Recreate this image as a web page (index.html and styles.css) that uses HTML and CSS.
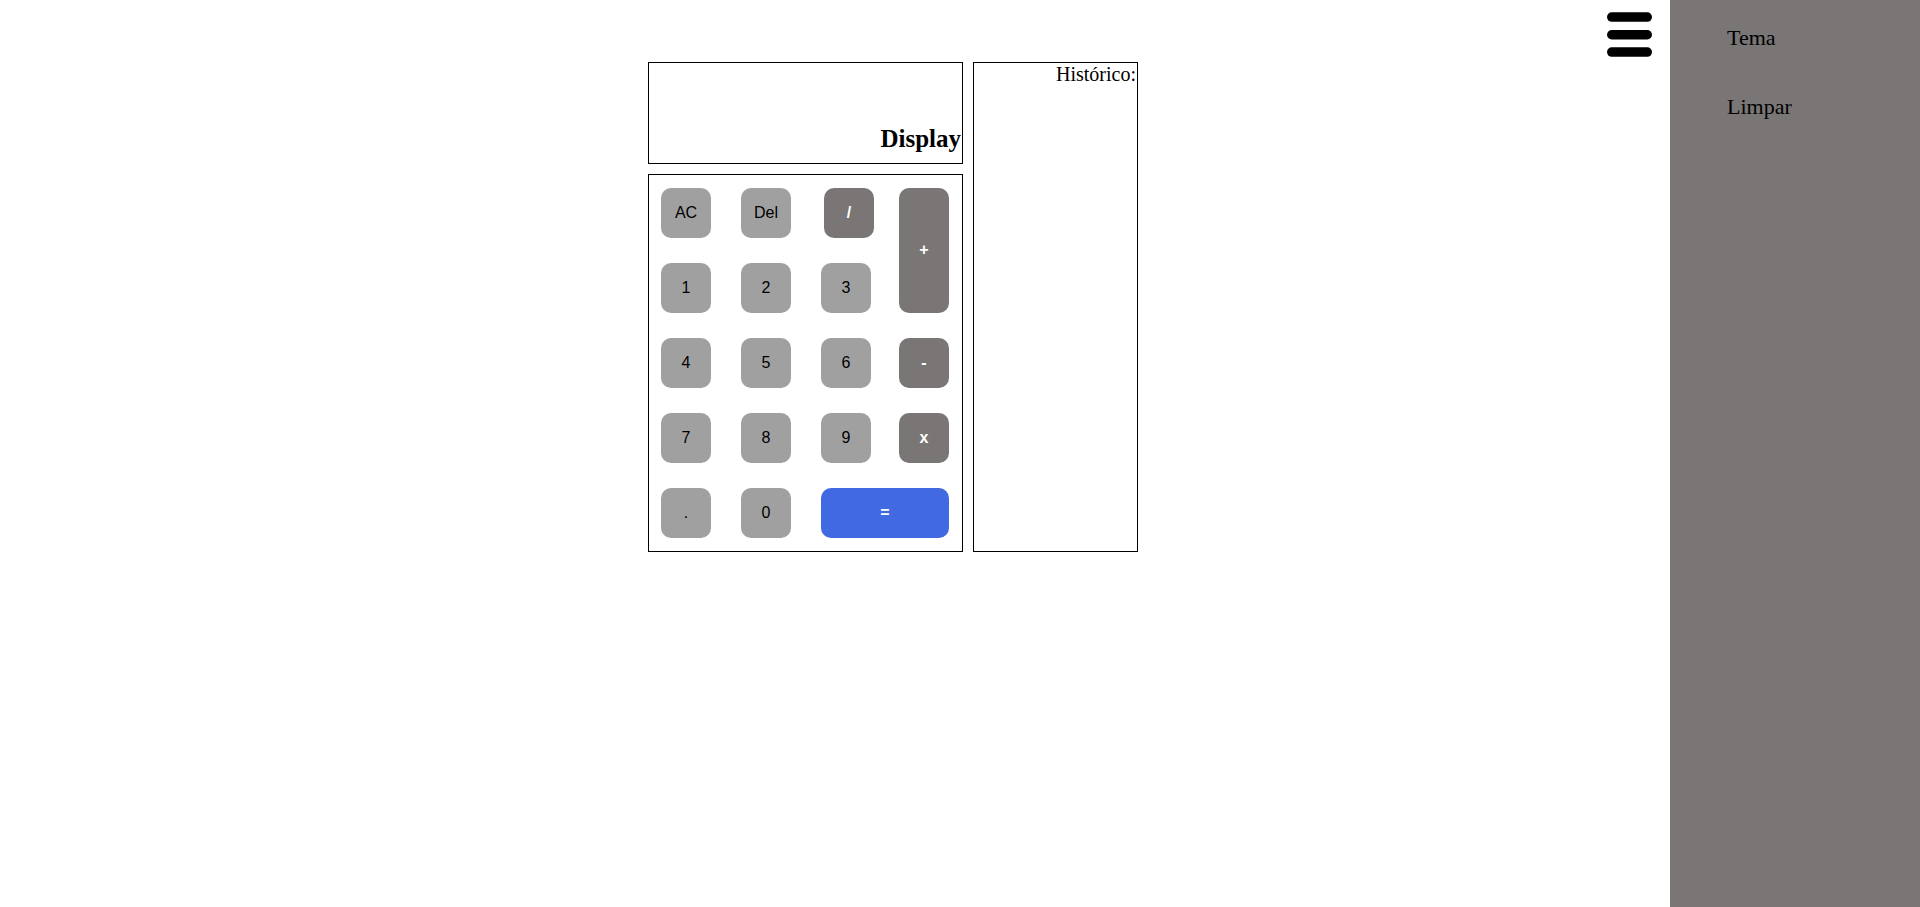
FILE: index.html
```html
<!DOCTYPE html>
<html lang="pt">
<head>
<meta charset="utf-8">
<title>Calculadora</title>
<link rel="stylesheet" href="styles.css">
</head>
<body>
<div class="page">
  <main class="main">
    <button class="menu-toggle" aria-label="Menu">
      <svg width="46" height="46" viewBox="0 0 46 46">
        <rect x="0" y="0.3" width="45" height="9.5" rx="4.75" fill="#000"/>
        <rect x="0" y="18" width="45" height="9.5" rx="4.75" fill="#000"/>
        <rect x="0" y="35.3" width="45" height="9.5" rx="4.75" fill="#000"/>
      </svg>
    </button>
    <div class="calc-wrap">
      <div class="calc">
        <div class="display"><h2 class="display-text">Display</h2></div>
        <div class="keypad">
          <button class="key light">AC</button>
          <button class="key light">Del</button>
          <button class="key dark slash">/</button>
          <button class="key dark tall">+</button>
          <button class="key light">1</button>
          <button class="key light">2</button>
          <button class="key light">3</button>
          <button class="key light">4</button>
          <button class="key light">5</button>
          <button class="key light">6</button>
          <button class="key dark">-</button>
          <button class="key light">7</button>
          <button class="key light">8</button>
          <button class="key light">9</button>
          <button class="key dark">x</button>
          <button class="key light">.</button>
          <button class="key light">0</button>
          <button class="key equals">=</button>
        </div>
      </div>
      <div class="history">Histórico:</div>
    </div>
  </main>
  <aside class="sidebar">
    <span class="side-item">Tema</span>
    <span class="side-item">Limpar</span>
  </aside>
</div>
</body>
</html>
```

FILE: styles.css
```css
* { box-sizing: border-box; }
html, body { margin: 0; padding: 0; background: #fff; }
body { font-family: "Liberation Serif", "Times New Roman", serif; color: #000; }

.page {
  display: flex;
  min-height: 907px;
}

.main {
  position: relative;
  flex: 1;
  padding: 62px 0 0 648px;
}

.menu-toggle {
  position: absolute;
  top: 12px;
  right: 17px;
  width: 46px;
  height: 46px;
  padding: 0;
  border: 0;
  background: none;
  display: block;
}
.menu-toggle svg { display: block; }

.calc-wrap {
  display: flex;
  align-items: flex-start;
  gap: 10px;
}

.calc {
  display: flex;
  flex-direction: column;
  gap: 10px;
  width: 315px;
}

.display {
  height: 102px;
  border: 1px solid #000;
  display: flex;
  justify-content: flex-end;
  align-items: flex-end;
  padding: 0 1px 10px 0;
}
.display-text {
  margin: 0;
  font-size: 25px;
  font-weight: bold;
  line-height: normal;
}

.keypad {
  height: 378px;
  border: 1px solid #000;
  padding: 13px 13px 13px 12px;
  display: grid;
  grid-template-columns: 80px 80px 78px 50px;
  grid-template-rows: repeat(5, 50px);
  row-gap: 25px;
}

.key {
  width: 50px;
  height: 50px;
  border: 0;
  border-radius: 10px;
  font-family: "Liberation Sans", Arial, sans-serif;
  font-size: 16px;
  padding: 0;
  color: #000;
}
.light { background: #a0a0a0; }
.dark { background: #7a7676; color: #fff; font-weight: bold; }
.slash { margin-left: 3px; }
.tall { grid-row: span 2; height: 125px; padding-bottom: 2px; }
.equals {
  grid-column: 3 / span 2;
  width: 128px;
  background: #4169e1;
  color: #fff;
  font-weight: bold;
}

.history {
  width: 165px;
  height: 490px;
  border: 1px solid #000;
  text-align: right;
  font-size: 20px;
  line-height: normal;
  padding-right: 1px;
}

.sidebar {
  width: 250px;
  flex: none;
  background: #7a7676;
  display: flex;
  flex-direction: column;
  gap: 45px;
  padding: 26px 0 0 57px;
}
.side-item {
  font-size: 22px;
  line-height: 24px;
}
```
